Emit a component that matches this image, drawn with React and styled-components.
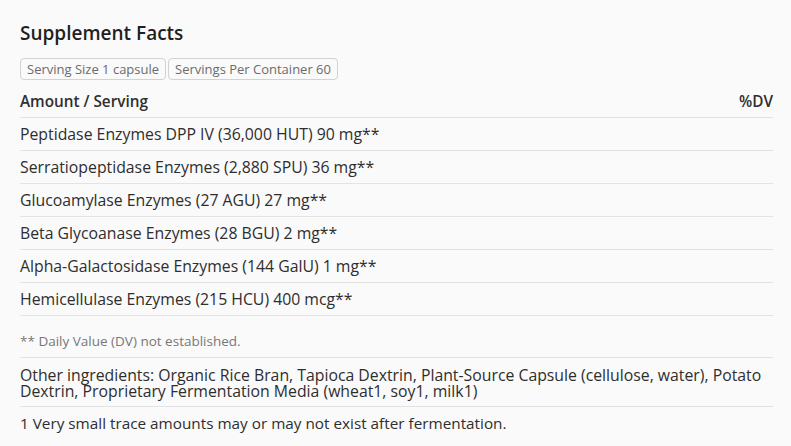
import React from 'react';
import styled, { createGlobalStyle } from 'styled-components';

const GlobalStyle = createGlobalStyle`
  html, body {
    margin: 0;
    padding: 0;
    background: #fafafa;
  }
  body {
    font-family: "Open Sans", "Noto Sans", sans-serif;
    color: #2e2e2e;
  }
`;

const Panel = styled.section`
  padding: 20px 18px 16px 20px;
`;

const Title = styled.h2`
  margin: 0 0 12px;
  font-size: 19px;
  font-weight: 600;
  line-height: 26px;
  color: #1f1f1f;
`;

const Badges = styled.div`
  display: flex;
  gap: 2px;
`;

const Badge = styled.span`
  display: inline-block;
  padding: 0 6px;
  height: 20px;
  line-height: 20px;
  border: 1px solid #d2d2d2;
  border-radius: 4px;
  font-size: 13px;
  color: #6b6b6b;
  background: #fafafa;
`;

const Row = styled.div`
  display: flex;
  justify-content: space-between;
  align-items: center;
  box-sizing: border-box;
  height: ${p => p.h || 33}px;
  border-bottom: 1px solid #e3e3e3;
  font-size: ${p => p.size || 15.8}px;
  font-weight: ${p => (p.head ? 600 : 400)};
  color: ${p => (p.muted ? '#777' : '#2e2e2e')};
  line-height: ${p => p.lh || 20}px;
  padding: ${p => p.pad || '0'};
  &:last-child {
    border-bottom: none;
  }
`;

const Text = styled.div``;

const rows = [
  'Peptidase Enzymes DPP IV (36,000 HUT) 90 mg**',
  'Serratiopeptidase Enzymes (2,880 SPU) 36 mg**',
  'Glucoamylase Enzymes (27 AGU) 27 mg**',
  'Beta Glycoanase Enzymes (28 BGU) 2 mg**',
  'Alpha-Galactosidase Enzymes (144 GalU) 1 mg**',
  'Hemicellulase Enzymes (215 HCU) 400 mcg**',
];

export default function App() {
  return (
    <>
      <GlobalStyle />
      <Panel>
        <Title>Supplement Facts</Title>
        <Badges>
          <Badge>Serving Size 1 capsule</Badge>
          <Badge>Servings Per Container 60</Badge>
        </Badges>
        <Row head h={38} size={15.3} pad="4px 0 0">
          <Text>Amount / Serving</Text>
          <Text>%DV</Text>
        </Row>
        {rows.map(r => (
          <Row key={r}>
            <Text>{r}</Text>
          </Row>
        ))}
        <Row h={42} size={13.5} muted pad="8px 0 0">
          <Text>** Daily Value (DV) not established.</Text>
        </Row>
        <Row h={49} lh={16} pad="2px 0 0">
          <Text>
            Other ingredients: Organic Rice Bran, Tapioca Dextrin, Plant-Source Capsule (cellulose, water), Potato
            <br />
            Dextrin, Proprietary Fermentation Media (wheat1, soy1, milk1)
          </Text>
        </Row>
        <Row h={32} size={15.3}>
          <Text>1 Very small trace amounts may or may not exist after fermentation.</Text>
        </Row>
      </Panel>
    </>
  );
}
